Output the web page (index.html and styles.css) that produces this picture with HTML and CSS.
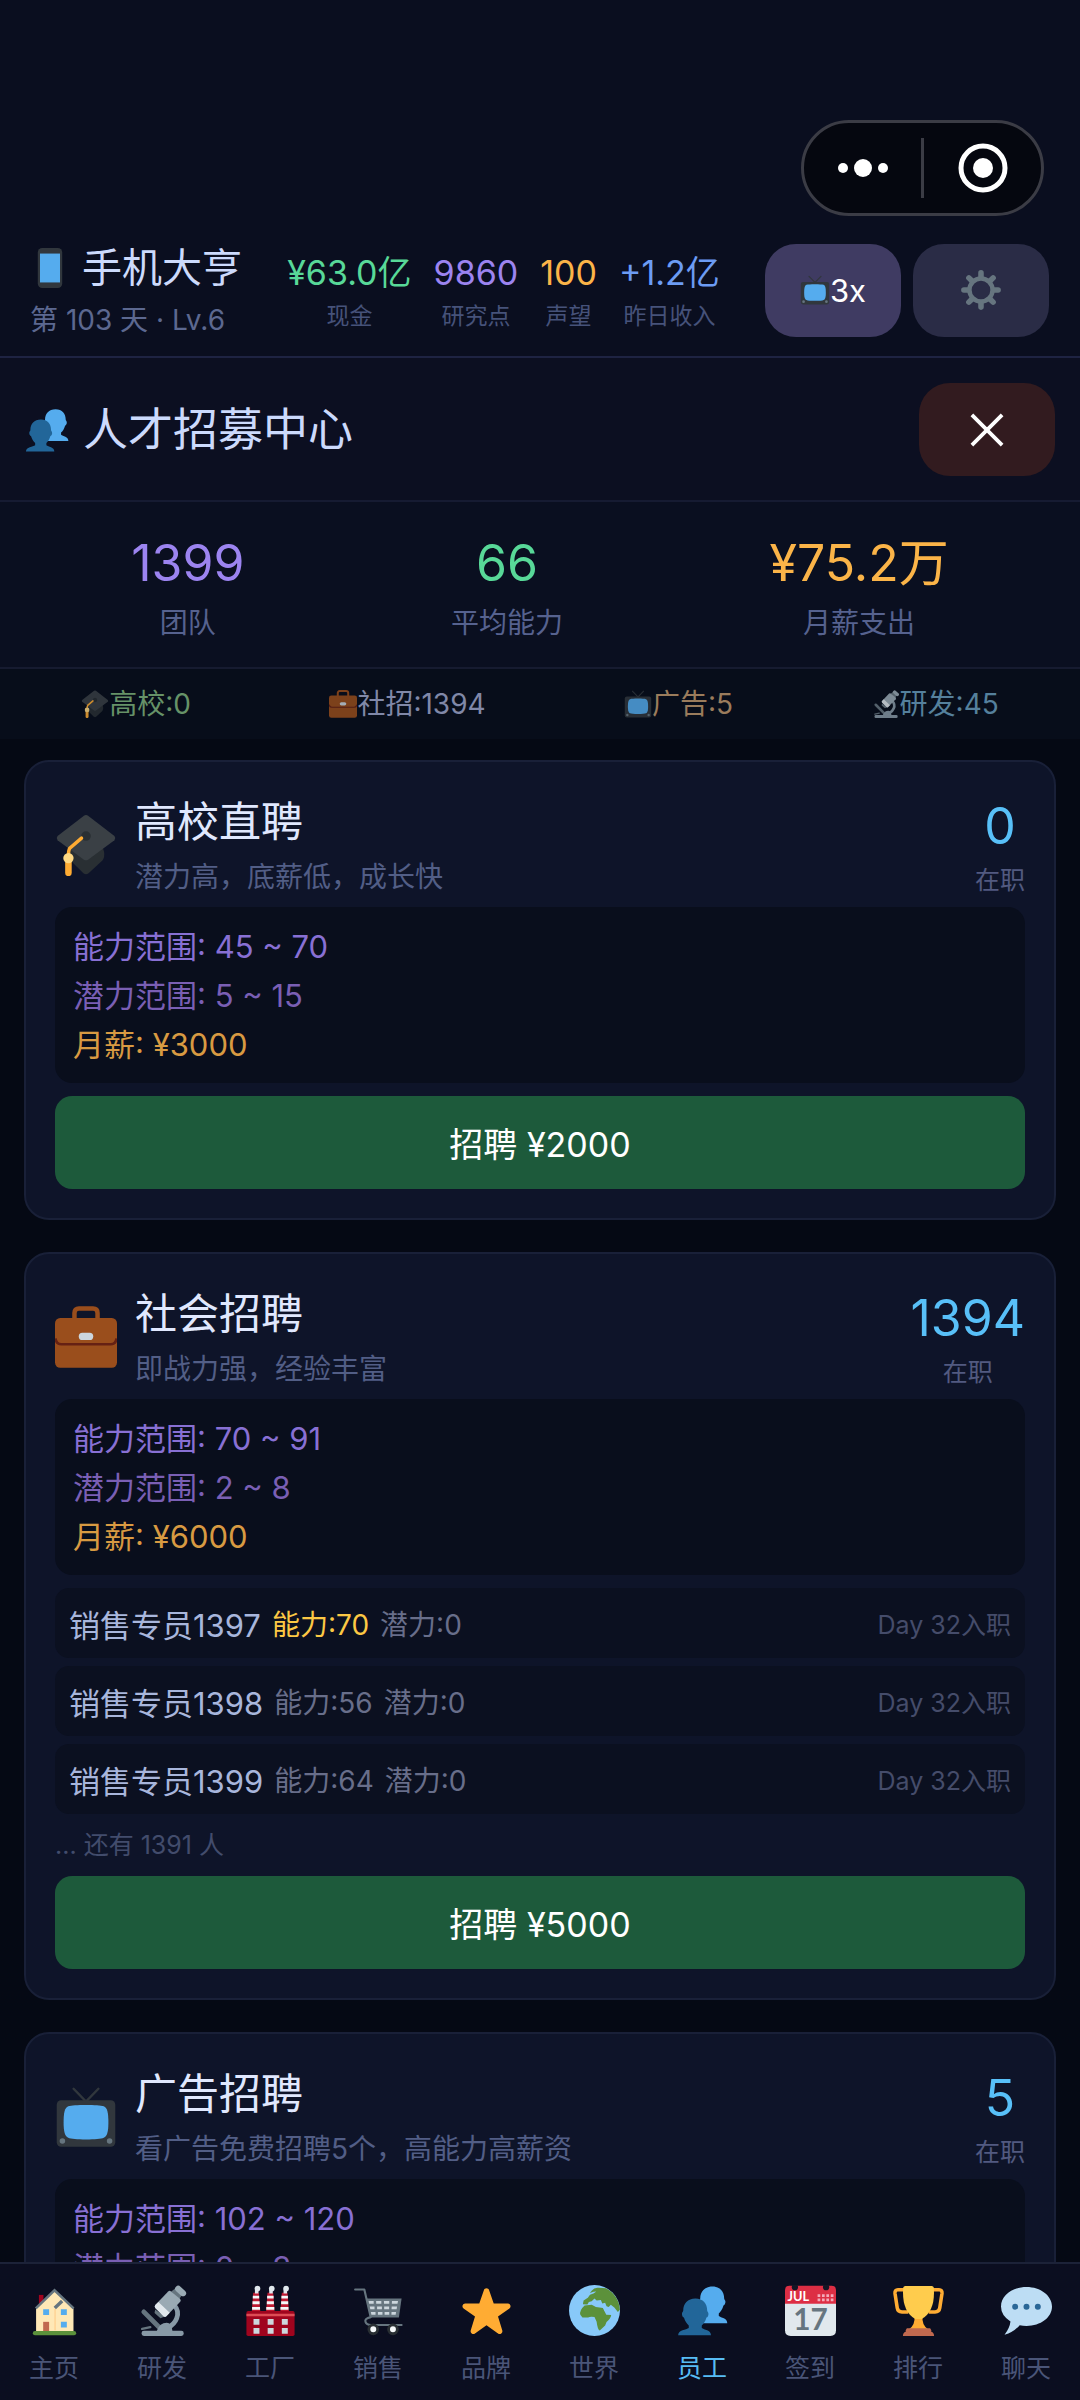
FILE: index.html
```html
<!DOCTYPE html>
<html lang="zh-CN">
<head>
  <meta charset="UTF-8">
  <meta name="viewport" content="width=device-width, initial-scale=1.0">
  <title>手机大亨</title>
  <link rel="stylesheet" href="styles.css">
</head>
<body>

<!-- icon set -->
<svg class="sprite" aria-hidden="true">
  <symbol id="i-phone" viewBox="0 0 36 36">
    <rect x="7" width="22" height="36" rx="4" fill="#31373d"/>
    <path fill="#55acee" d="M9 5h18v26H9z"/>
  </symbol>
  <symbol id="i-tv" viewBox="0 0 36 36">
    <path d="M10.8 1.6L18 9l7.2-7.4" fill="none" stroke="#31373d" stroke-width="1.4" stroke-linecap="round"/>
    <rect x="1" y="8.3" width="34" height="27" rx="2.6" fill="#31373d"/>
    <path fill="#55acee" d="M18 11c5 0 8.500.2 10.300.8 2 .8 2.700 3.600 2.700 9.200s-.7 8-2.700 9c-1.500.7-5.300 1-10.300 1s-8.800-.3-10.300-1c-2-1-2.700-3.400-2.700-9s.7-8.400 2.700-9.200C9.500 11.200 13 11 18 11z"/>
    <circle cx="4.300" cy="32" r="1.600" fill="#66757f"/>
    <circle cx="31.700" cy="32" r="1.600" fill="#66757f"/>
  </symbol>
  <symbol id="i-gear" viewBox="0 0 36 36">
    <g fill="none" stroke="#66757f">
      <circle cx="18" cy="18" r="10.400" stroke-width="4"/>
      <path stroke-width="5" stroke-linecap="round" d="M18 2.600V6M18 30v3.400M2.600 18H6M30 18h3.400M7.100 7.100l2.400 2.400M26.500 26.500l2.400 2.400M28.900 7.100l-2.400 2.400M9.500 26.500l-2.400 2.400"/>
    </g>
  </symbol>
  <symbol id="i-people" viewBox="0 0 36 36">
    <path fill="#55acee" transform="translate(12 -8)" d="M13 9c5.500 0 8.300 3.800 8.300 8.500 0 .8.900 1 .9 2.400s-.7 2.300-1.400 2.600c-.8 2.800-2 4.500-3.300 5.600v1.800c1.500 1.300 6 1.300 6 5.100H1.800c0-3.800 4.800-3.800 6.500-5.100v-1.800c-1.300-1.100-2.600-2.800-3.400-5.600-.7-.3-1.400-1.200-1.400-2.600s.9-1.600.9-2.400C4.400 12.800 7.500 9 13 9z"/>
    <path fill="#269" d="M13 9.500c5.500 0 8.300 3.800 8.300 8.500 0 .8.900 1 .9 2.400s-.7 2.300-1.400 2.600c-.8 2.800-2 4.500-3.300 5.600v1.800c1.500 1.300 6.500 1.300 6.500 5.100H.8c0-3.800 5.800-3.800 7.500-5.100v-1.800c-1.300-1.100-2.600-2.800-3.400-5.600-.7-.3-1.400-1.200-1.400-2.600s.9-1.600.9-2.400c0-4.700 3.100-8.500 8.600-8.500z"/>
  </symbol>
  <symbol id="i-close" viewBox="0 0 36 36">
    <path d="M2 2l32 32M34 2L2 34" stroke="#fff" stroke-width="4" fill="none"/>
  </symbol>
  <symbol id="i-cap" viewBox="0 0 36 36">
    <path fill="#292f33" d="M8 18v8l8.500 8.400q1.500 1.200 3 0l8-7.400q1.500-2 1-5l-1.500-5z"/>
    <path fill="#3a4045" d="M16.800 1q1.200-.8 2.400 0l15.300 11.800q1 1.200 0 2.400L19.200 26.500q-1.200.8-2.400 0L1.500 15.200q-1-1.200 0-2.400z"/>
    <circle cx="18" cy="12.800" r="2.800" fill="#292f33"/>
    <path d="M15.400 14L8.600 19.800q-.8 1-.8 5" fill="none" stroke="#ffac33" stroke-width="2" stroke-linecap="round"/>
    <path d="M7.800 27v7.200" stroke="#ffac33" stroke-width="3.800" stroke-linecap="round"/>
    <circle cx="7.800" cy="25.600" r="3" fill="#ffd983"/>
  </symbol>
  <symbol id="i-case" viewBox="0 0 36 36">
    <path d="M11.300 8V4q0-2.600 2.600-2.600h8.200q2.600 0 2.600 2.600v4" fill="none" stroke="#9a4e1c" stroke-width="2.600"/>
    <rect y="7" width="36" height="28.800" rx="3" fill="#9a4e1c"/>
    <path d="M.3 18.800q.3 3.400 3.400 3.400h28.600q3.100 0 3.400-3.400" fill="none" stroke="#662113" stroke-width="1.500"/>
    <rect x="13.800" y="15.600" width="8.400" height="4.200" rx="2.100" fill="#ccd6dd"/>
  </symbol>
  <symbol id="i-scope" viewBox="0 0 36 36">
    <path d="M4.800 19l11 11" stroke="#66757f" stroke-width="3.400" stroke-linecap="round"/>
    <path d="M26.500 14.500q3.500 4 1.500 9-1.500 4-6 6.500" fill="none" stroke="#8899a6" stroke-width="3.400"/>
    <path fill="#8899a6" d="M3.200 34q0-1.700 1.700-1.700H14q2-5.700 7-5.700 3.500 0 4 5.700h6.300q1.700 0 1.700 1.700v.3q0 1.700-1.700 1.700H4.900q-1.700 0-1.700-1.700z"/>
    <path d="M3.600 31l5.800-1.200" stroke="#66757f" stroke-width="1.600" stroke-linecap="round"/>
    <path fill="#66757f" d="M12.800 17.300l6.800 4.900-3 1.200-4.200-3.600zM24 4.800L27.500 2l4.500 4.500-2.500 4z"/>
    <path fill="#9aaab4" d="M22 4.500q1-.8 2 0l6.500 5.300q.8 1 0 2L20.700 22q-1 .8-2 0l-5.800-5.800q-.8-1 0-2z"/>
    <path fill="#e1e8ed" d="M12.900 14.200l2.200-2.200 8 7.500-2.400 2.500q-1 .8-2 0l-5.800-5.800q-.8-1 0-2z"/>
    <path fill="#9aaab4" d="M27.500 1.200q1.600-1.600 3.200 0l3.300 3q1.600 1.600 0 3.200-1.600 1.200-3 0l-3.500-3.200q-1.500-1.500 0-3z"/>
  </symbol>
  <symbol id="i-home" viewBox="0 0 36 36">
    <path fill="#a0041e" d="M7 7h3.200v8H7z"/>
    <path fill="#ffe8b6" d="M5 16.500L18 3.500l13.400 13v16.500H5z"/>
    <path d="M18.400 17v15" stroke="#ffcc8a" stroke-width=".8"/>
    <path d="M4.800 16.500L18 3.800l13.500 12.700" fill="none" stroke="#66757f" stroke-width="1.800"/>
    <path d="M18.200 16.300l5.200-5" stroke="#66757f" stroke-width="2.400"/>
    <path fill="#55acee" d="M10 17.200h4.200v4H10zM22.500 17.200h4.200v4h-4.200zM22.500 26h4.200v4h-4.200z"/>
    <path fill="#c1694f" d="M10 26h4.200v6.500H10z"/>
    <rect x="2.700" y="32.500" width="30.600" height="3" rx="1.500" fill="#5c913b"/>
  </symbol>
  <symbol id="i-factory" viewBox="0 0 36 36">
    <path fill="#be1931" d="M5.800 5.500h4l1 13h-6zM15.900 5.500h4l1 13h-6zM26 5.500h4l1 13h-6z"/>
    <path d="M5.500 8.500H10M5.300 12.500h5M5 16.500h5.600M15.600 8.500h4.600M15.400 12.500h5M15 16.500h5.700M25.700 8.500h4.600M25.500 12.500h5M25 16.500h5.700" stroke="#f5f8fa" stroke-width="2"/>
    <g fill="#e1e8ed"><circle cx="8.800" cy="2.500" r="2"/><circle cx="18.900" cy="2.500" r="2"/><circle cx="29" cy="2.500" r="2"/><path d="M7 3h2.500v3H7zM17.100 3h2.500v3h-2.500zM27.200 3h2.500v3h-2.500z"/></g>
    <rect x="1" y="18.300" width="34" height="17.700" rx="1.200" fill="#a0041e"/>
    <path fill="#dd4c55" d="M1 20.300h34v1.800H1z"/>
    <path fill="#ccd6dd" d="M6 24h4.200v4H6zM16 24h4.200v4H16zM26 24h4.200v4H26zM6 30.400h4.200v4H6zM16 30.400h4.200v4H16zM26 30.400h4.200v4H26z"/>
  </symbol>
  <symbol id="i-cart" viewBox="0 0 36 36">
    <path d="M1.500 3.200H8l4.500 19.500q-4.500 1-3.700 3.300.6 2.200 4 2.200h21.500" fill="none" stroke="#66757f" stroke-width="1.500" stroke-linecap="round" stroke-linejoin="round"/>
    <path fill="#66757f" d="M9.300 9.500h25L32.400 23H12.200z"/>
    <path fill="#ccd6dd" d="M11 11.300h3.600v2H11.400zM16.300 11.300h3.700v2h-3.600zM21.800 11.300h3.800v2h-3.700zM27.500 11.300h4.300l-.4 2h-4zM11.800 15.200h3.400v2h-3zM17 15.200h3.400v2H17zM22 15.200h3.500v2H22zM27.300 15.200h3.800l-.3 2h-3.600zM12.600 19h3.300v2H13zM17.600 19h3.200v2h-3.200zM22.300 19h3.300v2h-3.300zM27.200 19h3.200l-.3 2h-3z"/>
    <circle cx="14.300" cy="31.300" r="3.100" fill="#f5f8fa" stroke="#292f33" stroke-width="2"/>
    <circle cx="28.200" cy="31.300" r="3.100" fill="#f5f8fa" stroke="#292f33" stroke-width="2"/>
  </symbol>
  <symbol id="i-star" viewBox="0 0 36 36">
    <path fill="#ffac33" d="M27.287 34.627c-.404 0-.806-.124-1.152-.371L18 28.422l-8.135 5.834c-.343.247-.744.371-1.147.371-.405 0-.81-.124-1.158-.373-.684-.494-.973-1.372-.714-2.175l3.034-9.792-8.062-5.681c-.685-.494-.97-1.376-.708-2.177.262-.803 1.007-1.346 1.850-1.352l9.947-.014L16.150 3.678C16.420 2.882 17.164 2.347 18 2.347s1.580.535 1.850 1.331l3.243 9.385 9.947.014c.843.006 1.588.549 1.850 1.352.262.801-.023 1.683-.708 2.177l-8.062 5.681 3.034 9.792c.259.803-.03 1.681-.714 2.175-.348.249-.753.373-1.153.373z"/>
  </symbol>
  <symbol id="i-globe" viewBox="0 0 36 36">
    <circle cx="18" cy="18" r="18" fill="#88c9f9"/>
    <path fill="#5c913b" d="M16 4q2-2.500 5-2l5 .3q4.500 2.200 7 6.200 2.600 4 2.900 9l-1.400 1.500-2.500-3.200-2.500-1.800-1.500 1.500-1.500-.5-1-2.500-2 .5-1-2.500-3 .5-1.500-1.500-2 2-2 .5-1 1.800-3.200-.2.500-2.600 3-2 1.500-2.200 2.500-.8 2-1.500-2 .2-2.500 1z"/>
    <path fill="#5c913b" d="M8 21q-.8-3 3-6.500l5-.6 3 1.600 5 .8 2.300 4.700 3.500.2q-.3 2.500-3.300 5l-1 2.300-3.800 3.700q-1.500-.5-2.200-6.200L18 22.600q-3-.5-4.500.3l-4 .1z"/>
    <path d="M24 14.800l1.500 3.200 1.700 1.800 3-1.500-1.500-2" fill="none" stroke="#88c9f9" stroke-width="1"/>
  </symbol>
  <symbol id="i-trophy" viewBox="0 0 36 36">
    <path d="M9 3.300H3.500q-2.300 0-2.100 2.500L3 16.300q.4 2.700 3.300 2.700h4.500M27 3.300h5.500q2.300 0 2.100 2.500L33 16.300q-.4 2.700-3.300 2.700h-4.500" fill="none" stroke="#ffac33" stroke-width="2.500"/>
    <path fill="#ffac33" d="M15.200 22h5.600q-.5 6 3.700 9h-13q4.200-3 3.700-9z"/>
    <path fill="#ffcc4d" d="M7.200 2q.2-1.300 1.500-1.300h18.600q1.300 0 1.500 1.300 1.200 16.500-8.500 22h-4.600Q6 18.500 7.200 2z"/>
    <path fill="#c1694f" d="M9.800 30.500h16.400q1.300 1.500.8 2.500 2 .5 2 3H7q0-2.500 2-3-.5-1 .8-2.500z"/>
  </symbol>
  <symbol id="i-chat" viewBox="0 0 36 36">
    <path fill="#bdddf4" d="M18 1.400c9.900 0 18 6.100 18 13.800s-8 13.700-18 13.700q-2.500 0-4.800-.5-4.300 4.900-10.700 6.800 3.700-5 4.200-9.400Q0 21.500 0 15.200C0 7.500 8.100 1.400 18 1.400z"/>
    <circle cx="10" cy="15.300" r="2.100" fill="#2a6797"/>
    <circle cx="18" cy="15.300" r="2.100" fill="#2a6797"/>
    <circle cx="26" cy="15.300" r="2.100" fill="#2a6797"/>
  </symbol>
</svg>

<div class="app">

  <!-- mini program capsule -->
  <div class="capsule">
    <button type="button" class="capsule-btn" aria-label="更多">
      <svg viewBox="0 0 50 20" width="50" height="20" fill="#fff"><circle cx="5" cy="10" r="5"/><circle cx="25" cy="10" r="9"/><circle cx="45" cy="10" r="5"/></svg>
    </button>
    <span class="capsule-line"></span>
    <button type="button" class="capsule-btn" aria-label="关闭小程序">
      <svg viewBox="0 0 50 50" width="50" height="50"><circle cx="25" cy="25" r="22" fill="none" stroke="#fff" stroke-width="5"/><circle cx="25" cy="25" r="10" fill="#fff"/></svg>
    </button>
  </div>

  <header class="topbar">
    <div class="brand">
      <h1 class="brand-name"><svg class="icon-40"><use href="#i-phone"/></svg>手机大亨</h1>
      <div class="brand-day">第 103 天 · Lv.6</div>
    </div>
    <div class="money">
      <div class="money-item"><b class="c-green">¥63.0亿</b><span>现金</span></div>
      <div class="money-item"><b class="c-purple">9860</b><span>研究点</span></div>
      <div class="money-item"><b class="c-orange">100</b><span>声望</span></div>
      <div class="money-item"><b class="c-blue">+1.2亿</b><span>昨日收入</span></div>
    </div>
    <div class="actions">
      <button type="button" class="btn-square btn-speed"><svg class="icon-30"><use href="#i-tv"/></svg>3x</button>
      <button type="button" class="btn-square btn-setting" aria-label="设置"><svg class="icon-40"><use href="#i-gear"/></svg></button>
    </div>
  </header>

  <section class="panel-head">
    <h2 class="panel-title"><svg class="icon-44"><use href="#i-people"/></svg>人才招募中心</h2>
    <button type="button" class="btn-square btn-close" aria-label="关闭"><svg class="icon-34"><use href="#i-close"/></svg></button>
  </section>

  <section class="stats">
    <div class="stat"><b class="c-purple">1399</b><span>团队</span></div>
    <div class="stat"><b class="c-green">66</b><span>平均能力</span></div>
    <div class="stat"><b class="c-orange">¥75.2万</b><span>月薪支出</span></div>
  </section>

  <section class="channels">
    <div class="channel ch-school"><svg class="icon-28"><use href="#i-cap"/></svg>高校:0</div>
    <div class="channel ch-social"><svg class="icon-28"><use href="#i-case"/></svg>社招:1394</div>
    <div class="channel ch-ad"><svg class="icon-28"><use href="#i-tv"/></svg>广告:5</div>
    <div class="channel ch-lab"><svg class="icon-28"><use href="#i-scope"/></svg>研发:45</div>
  </section>

  <main class="list">

    <article class="card">
      <div class="card-head">
        <svg class="icon-62"><use href="#i-cap"/></svg>
        <div class="card-text">
          <h3>高校直聘</h3>
          <p>潜力高，底薪低，成长快</p>
        </div>
        <div class="card-count"><b>0</b><span>在职</span></div>
      </div>
      <div class="info">
        <div class="info-ability">能力范围: 45 ~ 70</div>
        <div class="info-potential">潜力范围: 5 ~ 15</div>
        <div class="info-salary">月薪: ¥3000</div>
      </div>
      <button type="button" class="btn-hire">招聘 ¥2000</button>
    </article>

    <article class="card">
      <div class="card-head">
        <svg class="icon-62"><use href="#i-case"/></svg>
        <div class="card-text">
          <h3>社会招聘</h3>
          <p>即战力强，经验丰富</p>
        </div>
        <div class="card-count"><b>1394</b><span>在职</span></div>
      </div>
      <div class="info">
        <div class="info-ability">能力范围: 70 ~ 91</div>
        <div class="info-potential">潜力范围: 2 ~ 8</div>
        <div class="info-salary">月薪: ¥6000</div>
      </div>
      <ul class="staff">
        <li><span class="staff-name">销售专员1397</span><span class="staff-high">能力:70</span><span>潜力:0</span><span class="staff-day">Day 32入职</span></li>
        <li><span class="staff-name">销售专员1398</span><span>能力:56</span><span>潜力:0</span><span class="staff-day">Day 32入职</span></li>
        <li><span class="staff-name">销售专员1399</span><span>能力:64</span><span>潜力:0</span><span class="staff-day">Day 32入职</span></li>
      </ul>
      <div class="staff-more">... 还有 1391 人</div>
      <button type="button" class="btn-hire">招聘 ¥5000</button>
    </article>

    <article class="card">
      <div class="card-head">
        <svg class="icon-62"><use href="#i-tv"/></svg>
        <div class="card-text">
          <h3>广告招聘</h3>
          <p>看广告免费招聘5个，高能力高薪资</p>
        </div>
        <div class="card-count"><b>5</b><span>在职</span></div>
      </div>
      <div class="info">
        <div class="info-ability">能力范围: 102 ~ 120</div>
        <div class="info-potential">潜力范围: 0 ~ 3</div>
      </div>
    </article>

  </main>

  <nav class="tabs">
    <a href="#"><svg class="icon-51"><use href="#i-home"/></svg>主页</a>
    <a href="#"><svg class="icon-51"><use href="#i-scope"/></svg>研发</a>
    <a href="#"><svg class="icon-51"><use href="#i-factory"/></svg>工厂</a>
    <a href="#"><svg class="icon-51"><use href="#i-cart"/></svg>销售</a>
    <a href="#"><svg class="icon-51"><use href="#i-star"/></svg>品牌</a>
    <a href="#"><svg class="icon-51"><use href="#i-globe"/></svg>世界</a>
    <a href="#" class="active"><svg class="icon-51"><use href="#i-people"/></svg>员工</a>
    <a href="#">
      <svg class="icon-51" viewBox="0 0 36 36">
        <path fill="#e1e8ed" d="M0 12h36v20q0 4-4 4H4q-4 0-4-4z"/>
        <path fill="#dd2e44" d="M3 .5h30q3 0 3 3v9.800H0V3.500q0-3 3-3z"/>
        <circle cx="7" cy="1.500" r="2.200" fill="#141625"/>
        <circle cx="29" cy="1.500" r="2.200" fill="#141625"/>
        <path d="M23 7.500h11.500M23 10.500h11.500" stroke="#f4abba" stroke-width="1.900" stroke-dasharray="1.900 1.200"/>
        <text x="1.800" y="11.300" class="cal-month">JUL</text>
        <text x="18" y="32" class="cal-day">17</text>
      </svg>签到</a>
    <a href="#"><svg class="icon-51"><use href="#i-trophy"/></svg>排行</a>
    <a href="#"><svg class="icon-51"><use href="#i-chat"/></svg>聊天</a>
  </nav>

</div>

</body>
</html>
```

FILE: styles.css
```css
* {
  box-sizing: border-box;
}

body {
  margin: 0;
  background-color: #050914;
  color: #dfe6fb;
  font-family: Inter, "Noto Sans CJK SC", sans-serif;
}

h1, h2, h3, p, ul {
  margin: 0;
  padding: 0;
  font-weight: 400;
}

b {
  font-weight: 400;
}

button {
  border: none;
  padding: 0;
  color: #fff;
  font-family: inherit;
  cursor: pointer;
}

.sprite {
  position: absolute;
  width: 0;
  height: 0;
}

.icon-28 { width: 28px; height: 28px; }
.icon-30 { width: 30px; height: 30px; }
.icon-34 { width: 34px; height: 34px; }
.icon-40 { width: 40px; height: 40px; }
.icon-44 { width: 44px; height: 44px; }
.icon-51 { width: 51px; height: 51px; }
.icon-62 { width: 62px; height: 62px; }

.c-green { color: #58d898; }
.c-purple { color: #9c84f0; }
.c-orange { color: #fbb448; }
.c-blue { color: #6c9cf4; }

.app {
  position: relative;
  display: flex;
  flex-direction: column;
  height: 100vh;
}

/* capsule floats over the top bar */
.capsule {
  position: absolute;
  top: 120px;
  right: 36px;
  display: flex;
  align-items: center;
  width: 243px;
  height: 96px;
  border: 3px solid #3b3c45;
  border-radius: 48px;
  background-color: #05070f;
}

.capsule-btn {
  flex: 1;
  display: flex;
  align-items: center;
  justify-content: center;
  background: none;
}

.capsule-line {
  width: 3px;
  height: 60px;
  background-color: #3b3c45;
}

/* top bar */
.topbar {
  display: flex;
  align-items: center;
  justify-content: space-between;
  padding: 240px 31px 16px 30px;
  border-bottom: 2px solid #1e2342;
  background-color: #0a0e1f;
}

.brand-name {
  display: flex;
  align-items: center;
  gap: 12px;
  color: #ccdafc;
  font-size: 40px;
  line-height: 56px;
}

.brand-day {
  margin-top: 4px;
  color: #5c6890;
  font-size: 28px;
  line-height: 40px;
}

.money {
  display: flex;
  gap: 22px;
}

.money-item {
  display: flex;
  flex-direction: column;
  align-items: center;
  gap: 4px;
}

.money-item b {
  font-size: 34px;
  line-height: 48px;
}

.money-item span {
  color: #46527a;
  font-size: 23px;
  line-height: 30px;
}

.actions {
  display: flex;
  gap: 12px;
}

.btn-square {
  display: flex;
  align-items: center;
  justify-content: center;
  width: 136px;
  height: 93px;
  border-radius: 31px;
  font-size: 31px;
}

.btn-speed { background-color: #3f3b62; }
.btn-setting { background-color: #2a2c46; }
.btn-close { background-color: #321b1f; }

/* panel title */
.panel-head {
  display: flex;
  align-items: center;
  justify-content: space-between;
  padding: 25px 25px 24px;
  border-bottom: 2px solid #161b32;
  background-color: #0c0f21;
}

.panel-title {
  display: flex;
  align-items: center;
  gap: 14px;
  color: #ccdafc;
  font-size: 45px;
  line-height: 60px;
}

/* stats */
.stats {
  display: flex;
  justify-content: space-around;
  padding: 29px 28px 25px;
  border-bottom: 2px solid #161b30;
  background-color: #0a0f20;
}

.stat {
  display: flex;
  flex-direction: column;
  align-items: center;
  gap: 9px;
}

.stat b {
  font-size: 50px;
  line-height: 64px;
}

.stat span {
  color: #56628f;
  font-size: 28px;
  line-height: 38px;
}

.channels {
  display: flex;
  justify-content: space-around;
  padding: 15px 12px;
  background-color: #070d1a;
  font-size: 28px;
  line-height: 40px;
}

.channel {
  display: flex;
  align-items: center;
}

.channel svg {
  opacity: 0.8;
}

.ch-school { color: #669268; }
.ch-social { color: #8088a8; }
.ch-ad { color: #9a7c5c; }
.ch-lab { color: #55809c; }

/* recruit cards */
.list {
  flex: 1;
  min-height: 0;
  display: flex;
  flex-direction: column;
  gap: 32px;
  padding: 21px 24px;
  overflow: auto;
  scrollbar-width: none;
}

.card {
  flex-shrink: 0;
  padding: 29px;
  border: 2px solid #192038;
  border-radius: 25px;
  background-color: #0e1429;
}

.card-head {
  display: flex;
  align-items: center;
  gap: 18px;
  height: 108px;
  margin-bottom: 8px;
}

.card-text {
  flex: 1;
}

.card-text h3 {
  color: #e0e8fe;
  font-size: 42px;
  line-height: 56px;
}

.card-text p {
  margin-top: 8px;
  color: #525e86;
  font-size: 28px;
  line-height: 38px;
}

.card-count {
  display: flex;
  flex-direction: column;
  align-items: center;
  gap: 4px;
}

.card-count b {
  color: #58c0f8;
  font-size: 50px;
  line-height: 66px;
}

.card-count span {
  color: #525a80;
  font-size: 25px;
  line-height: 34px;
}

.info {
  padding: 15px 18px 14px;
  border-radius: 17px;
  background-color: #090e1c;
  font-size: 31px;
  line-height: 49px;
}

.info-ability { color: #8870d4; }
.info-potential { color: #7a5fb4; }
.info-salary { color: #d89a42; }

.staff {
  display: flex;
  flex-direction: column;
  gap: 8px;
  margin-top: 13px;
  list-style: none;
}

.staff li {
  display: flex;
  align-items: center;
  gap: 11px;
  height: 70px;
  padding: 0 14px;
  border-radius: 14px;
  background-color: #0b1020;
  color: #686e8a;
  font-size: 28px;
}

.staff .staff-name {
  color: #a8b6dc;
  font-size: 31px;
}

.staff .staff-high {
  color: #fcc844;
}

.staff .staff-day {
  margin-left: auto;
  color: #454c6a;
  font-size: 25px;
}

.staff-more {
  color: #424c6c;
  font-size: 25px;
  line-height: 62px;
}

.btn-hire {
  display: block;
  width: 100%;
  height: 93px;
  border-radius: 17px;
  background-color: #1d5a3b;
  font-size: 34px;
}

.info + .btn-hire {
  margin-top: 13px;
}

/* bottom tabs */
.tabs {
  display: flex;
  border-top: 2px solid #1c2238;
  background-color: #0b0e20;
}

.tabs a {
  flex: 1;
  display: flex;
  flex-direction: column;
  align-items: center;
  gap: 14px;
  padding: 21px 0 14px;
  color: #4a5578;
  font-size: 25px;
  line-height: 36px;
  text-decoration: none;
}

.tabs a.active {
  color: #58bcf4;
}

.cal-month {
  fill: #fff;
  font-family: Lato, sans-serif;
  font-size: 9px;
  font-weight: 700;
}

.cal-day {
  fill: #66757f;
  font-family: Lato, sans-serif;
  font-size: 21px;
  font-weight: 700;
  text-anchor: middle;
}
```
